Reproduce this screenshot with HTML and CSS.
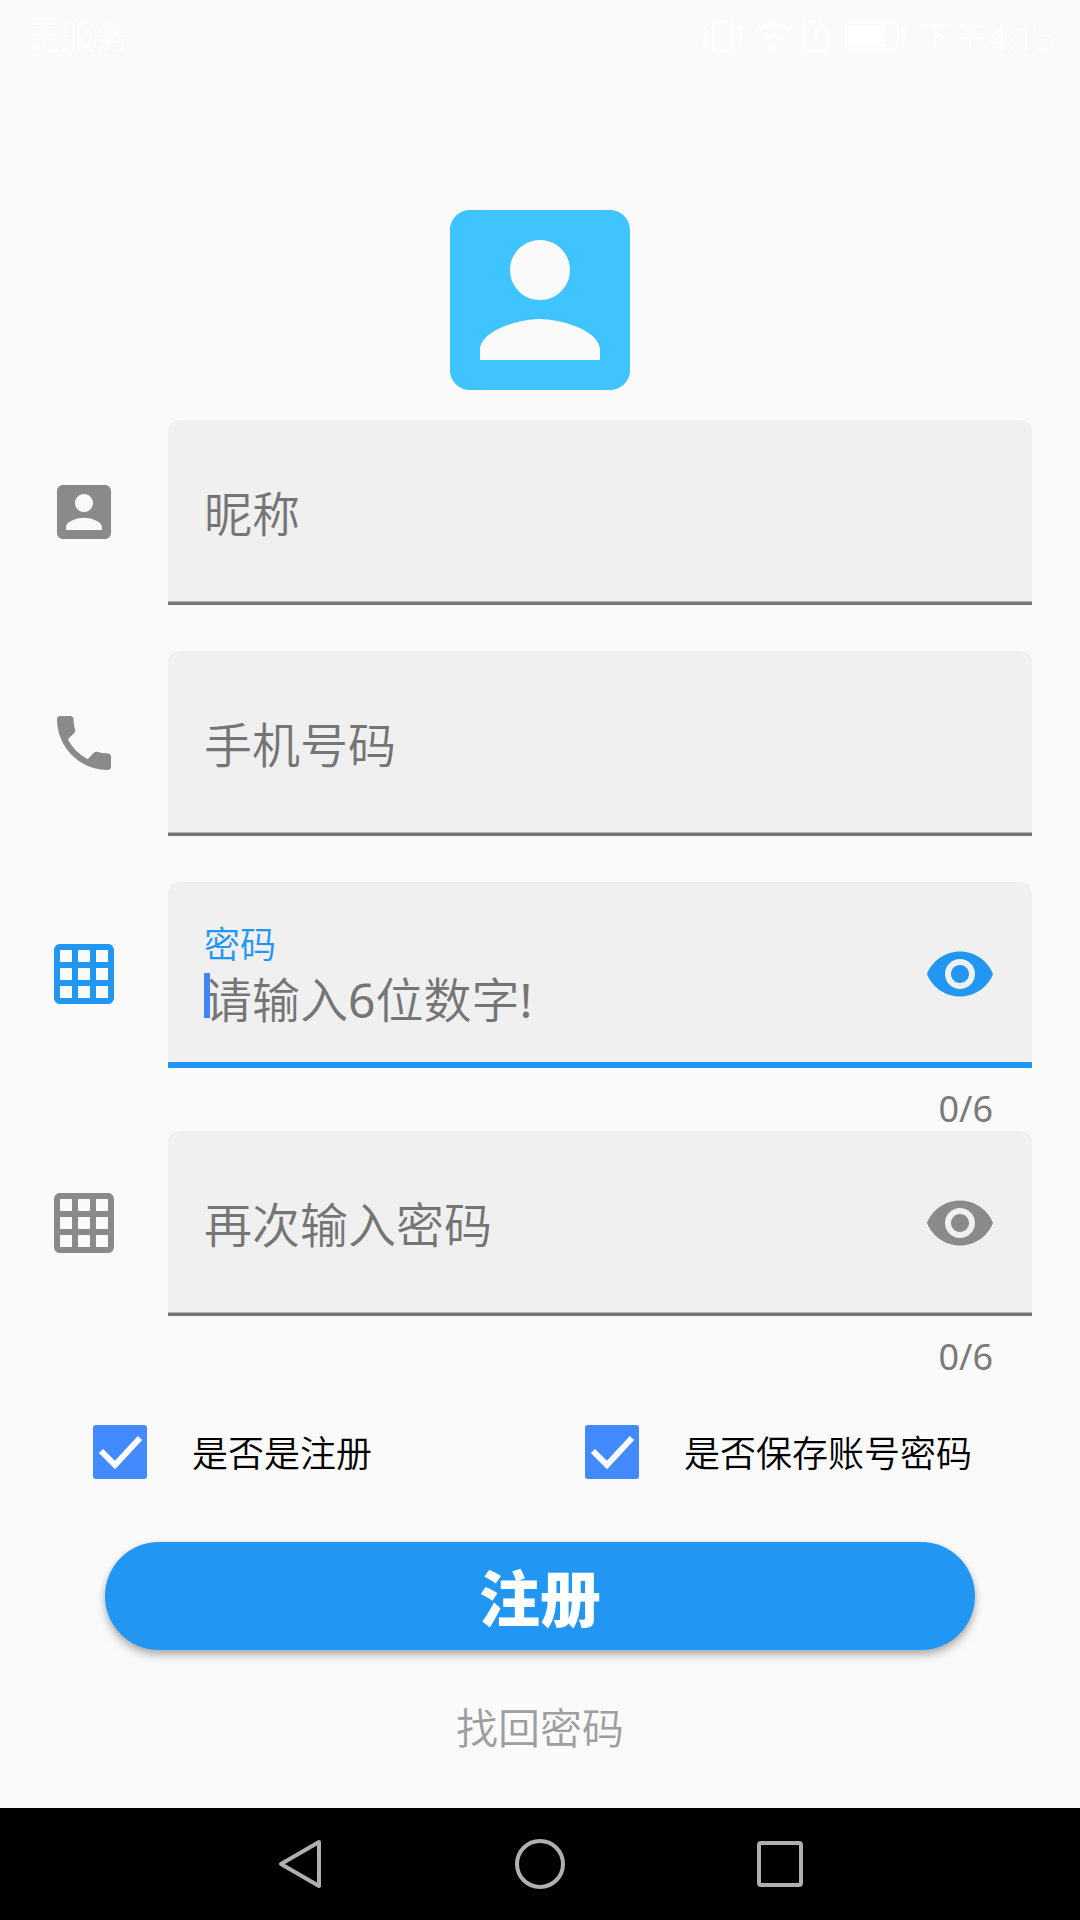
FILE: index.html
```html
<!DOCTYPE html>
<html lang="zh">
<head>
<meta charset="utf-8">
<title>注册</title>
<link rel="stylesheet" href="styles.css">
</head>
<body>
<div class="screen">
  <header class="status">
    <span class="status-carrier">无服务</span>
    <div class="status-right">
      <svg class="st-vibrate" viewBox="0 0 42 33"><path d="M5 5L1.500 9 5 13 1.500 17 5 21 1.500 25M37 5l3.500 4L37 13l3.500 4L37 21l3.500 4" fill="none" stroke="#fff" stroke-width="2.500"/><rect x="11.500" y="1.500" width="19" height="30" rx="3" fill="none" stroke="#fff" stroke-width="3"/></svg>
      <svg class="st-wifi" viewBox="0 0 38 31"><path d="M1.500 11Q19-5 36.500 11M9 19Q19 9 29 19" fill="none" stroke="#fff" stroke-width="3.500"/><circle cx="19" cy="27" r="3.500" fill="#fff"/></svg>
      <svg class="st-sim" viewBox="0 0 26 33"><path d="M1.500 3a1.500 1.500 0 0 1 1.500-1.500h12L24.500 11v19a1.500 1.500 0 0 1-1.500 1.500H3A1.500 1.500 0 0 1 1.500 30z" fill="none" stroke="#fff" stroke-width="3"/><path d="M13 9v11M13 23.500v4" stroke="#fff" stroke-width="3.500"/></svg>
      <svg class="st-batt" viewBox="0 0 61 28"><rect x="1" y="1" width="52" height="26" rx="3" fill="none" stroke="#fff" stroke-width="2"/><rect x="3" y="3" width="37" height="21" fill="#fff"/><rect x="56" y="5" width="5" height="17" fill="#fff"/></svg>
      <span class="status-time">下午4:15</span>
    </div>
  </header>

  <main class="form">
    <svg class="avatar" viewBox="0 0 24 24"><path d="M3 5v14c0 1.1.89 2 2 2h14c1.100 0 2-.9 2-2V5c0-1.100-.9-2-2-2H5c-1.110 0-2 .9-2 2zm12 4c0 1.660-1.340 3-3 3s-3-1.340-3-3 1.340-3 3-3 3 1.340 3 3zm-9 8c0-2 4-3.100 6-3.100s6 1.100 6 3.100v1H6v-1z"/></svg>

    <div class="row">
      <svg class="icon" viewBox="0 0 24 24"><path d="M3 5v14c0 1.1.89 2 2 2h14c1.100 0 2-.9 2-2V5c0-1.100-.9-2-2-2H5c-1.110 0-2 .9-2 2zm12 4c0 1.660-1.340 3-3 3s-3-1.340-3-3 1.340-3 3-3 3 1.340 3 3zm-9 8c0-2 4-3.100 6-3.100s6 1.100 6 3.100v1H6v-1z"/></svg>
      <div class="field"><span class="placeholder">昵称</span></div>
    </div>

    <div class="row">
      <svg class="icon" viewBox="0 0 24 24"><path d="M6.620 10.790c1.440 2.830 3.760 5.140 6.590 6.590l2.200-2.200c.27-.27.67-.36 1.020-.24 1.120.37 2.330.57 3.570.57.55 0 1 .45 1 1V20c0 .55-.45 1-1 1-9.390 0-17-7.610-17-17 0-.55.45-1 1-1h3.500c.55 0 1 .45 1 1 0 1.250.2 2.450.57 3.570.11.35.03.74-.25 1.020l-2.200 2.200z"/></svg>
      <div class="field"><span class="placeholder">手机号码</span></div>
    </div>

    <div class="row row-counter">
      <svg class="icon icon-active" viewBox="0 0 24 24"><path d="M20 2H4c-1.100 0-2 .9-2 2v16c0 1.100.9 2 2 2h16c1.100 0 2-.9 2-2V4c0-1.100-.9-2-2-2zM8 20H4v-4h4v4zm0-6H4v-4h4v4zm0-6H4V4h4v4zm6 12h-4v-4h4v4zm0-6h-4v-4h4v4zm0-6h-4V4h4v4zm6 12h-4v-4h4v4zm0-6h-4v-4h4v4zm0-6h-4V4h4v4z"/></svg>
      <div class="field-wrap">
        <div class="field field-active">
          <div class="field-text">
            <span class="float-label">密码</span>
            <span class="placeholder placeholder-focused"><i class="caret"></i>请输入<span class="num">6</span>位数字<span class="num">!</span></span>
          </div>
          <svg class="eye icon-active" viewBox="0 0 24 24"><path d="M12 4.500C7 4.500 2.730 7.610 1 12c1.730 4.390 6 7.500 11 7.500s9.270-3.110 11-7.500c-1.730-4.390-6-7.500-11-7.500zM12 17c-2.760 0-5-2.240-5-5s2.240-5 5-5 5 2.240 5 5-2.240 5-5 5zm0-8c-1.660 0-3 1.340-3 3s1.340 3 3 3 3-1.340 3-3-1.340-3-3-3z"/></svg>
        </div>
        <div class="counter">0/6</div>
      </div>
    </div>

    <div class="row row-counter">
      <svg class="icon" viewBox="0 0 24 24"><path d="M20 2H4c-1.100 0-2 .9-2 2v16c0 1.100.9 2 2 2h16c1.100 0 2-.9 2-2V4c0-1.100-.9-2-2-2zM8 20H4v-4h4v4zm0-6H4v-4h4v4zm0-6H4V4h4v4zm6 12h-4v-4h4v4zm0-6h-4v-4h4v4zm0-6h-4V4h4v4zm6 12h-4v-4h4v4zm0-6h-4v-4h4v4zm0-6h-4V4h4v4z"/></svg>
      <div class="field-wrap">
        <div class="field">
          <div class="field-text"><span class="placeholder">再次输入密码</span></div>
          <svg class="eye" viewBox="0 0 24 24"><path d="M12 4.500C7 4.500 2.730 7.610 1 12c1.730 4.390 6 7.500 11 7.500s9.270-3.110 11-7.500c-1.730-4.390-6-7.500-11-7.500zM12 17c-2.760 0-5-2.240-5-5s2.240-5 5-5 5 2.240 5 5-2.240 5-5 5zm0-8c-1.660 0-3 1.340-3 3s1.340 3 3 3 3-1.340 3-3-1.340-3-3-3z"/></svg>
        </div>
        <div class="counter">0/6</div>
      </div>
    </div>

    <div class="checks">
      <label class="check">
        <span class="box"><svg viewBox="0 0 54 54"><path d="M8 26l14 14L47 13" fill="none" stroke="#fff" stroke-width="6"/></svg></span>
        <span class="check-text">是否是注册</span>
      </label>
      <label class="check">
        <span class="box"><svg viewBox="0 0 54 54"><path d="M8 26l14 14L47 13" fill="none" stroke="#fff" stroke-width="6"/></svg></span>
        <span class="check-text">是否保存账号密码</span>
      </label>
    </div>

    <button class="submit" type="button">注册</button>
    <div class="recover">找回密码</div>
  </main>

  <nav class="navbar">
    <svg class="nav-back" viewBox="0 0 44 50"><path d="M41 3L3 25l38 22z" fill="none" stroke="#b0b0b0" stroke-width="4" stroke-linejoin="round"/></svg>
    <svg class="nav-home" viewBox="0 0 50 50"><circle cx="25" cy="25" r="23" fill="none" stroke="#b0b0b0" stroke-width="4"/></svg>
    <svg class="nav-recent" viewBox="0 0 46 46"><rect x="2" y="2" width="42" height="42" rx="2" fill="none" stroke="#b0b0b0" stroke-width="4"/></svg>
  </nav>
</div>
</body>
</html>
```

FILE: styles.css
```css
* { box-sizing: border-box; }
html, body { margin: 0; padding: 0; }
body {
  width: 1080px;
  height: 1920px;
  background: #fafafa;
  font-family: "Noto Sans", "Noto Sans CJK SC", sans-serif;
  overflow: hidden;
}
.screen { display: flex; flex-direction: column; height: 1920px; }

.status {
  height: 72px;
  flex: none;
  display: flex;
  justify-content: space-between;
  align-items: center;
  padding: 0 25px 0 26px;
  color: #fff;
  font-size: 34.5px;
  font-weight: 300;
  line-height: 40px;
}
.status-carrier { margin-top: 2px; }
.status-right { display: flex; align-items: center; gap: 10px; }
.st-vibrate { width: 42px; height: 33px; margin-left: -3px; }
.st-wifi { width: 38px; height: 31px; }
.st-sim { width: 26px; height: 33px; margin-left: 1px; }
.st-batt { width: 61px; height: 28px; margin-left: 6px; }
.status-time { margin: 2px 0 0 2px; }

.form { flex: 1; display: flex; flex-direction: column; }
.avatar {
  display: block;
  width: 240px;
  height: 240px;
  margin: 108px auto 0;
  fill: #40c4ff;
}

.row {
  display: flex;
  align-items: flex-start;
  gap: 48px;
  margin: 0 48px 46px;
}
.row-counter { margin-bottom: 0; }

.icon { width: 72px; height: 72px; flex: none; fill: #8a8a8a; margin-top: 56px; }
.eye { width: 72px; height: 72px; flex: none; fill: #8a8a8a; }
.icon-active { fill: #2196f3; }

.field-wrap { flex: 1; height: 249px; }
.field {
  flex: 1;
  height: 185px;
  padding: 2px 36px 0;
  display: flex;
  align-items: center;
  justify-content: space-between;
  background: #f0f0f0;
  border-bottom: 3px solid #757575;
  border-radius: 12px 12px 0 0;
  box-shadow: inset 0 -1px 0 #b4b4b4;
}
.field-active {
  height: 186px;
  padding-top: 4px;
  border-bottom: 6px solid #2196f3;
  box-shadow: none;
}
.field-text { display: flex; flex-direction: column; }
.placeholder {
  font-size: 48px;
  font-weight: 350;
  line-height: 60px;
  padding-top: 4px;
  color: #757575;
}
.num { font-weight: 400; }
.float-label {
  font-size: 36px;
  font-weight: 350;
  line-height: 42px;
  color: #2196f3;
  margin-top: 5px;
}
.placeholder-focused {
  position: relative;
  padding-top: 0;
  margin-top: 4px;
}
.caret {
  position: absolute;
  left: 0;
  top: 3px;
  width: 6px;
  height: 45px;
  background: #4285f4;
}
.counter {
  padding: 17px 39px 0 0;
  text-align: right;
  font-size: 36px;
  line-height: 48px;
  color: #7a7a7a;
}

.checks {
  display: flex;
  justify-content: space-between;
  padding: 45px 108px 0 93px;
}
.check {
  display: flex;
  align-items: center;
  gap: 45px;
  font-size: 36px;
  font-weight: 350;
  line-height: 50px;
  color: #000;
}
.check-text { padding-top: 4px; }
.box {
  width: 54px;
  height: 54px;
  background: #448aff;
  border-radius: 3px;
}
.box svg { display: block; width: 54px; height: 54px; }

.submit {
  display: block;
  width: 870px;
  height: 108px;
  margin: 63px auto 0;
  padding: 0 0 2px;
  border: 0;
  border-radius: 54px;
  background: #2196f3;
  color: #fff;
  font-family: inherit;
  font-size: 61px;
  font-weight: 900;
  box-shadow: 0 6px 10px rgba(0, 0, 0, .22), 0 2px 6px rgba(0, 0, 0, .14);
}
.recover {
  margin-top: 48px;
  text-align: center;
  font-size: 42px;
  font-weight: 350;
  line-height: 60px;
  color: #9e9e9e;
}

.navbar {
  height: 112px;
  flex: none;
  background: #000;
  display: flex;
  align-items: flex-start;
  padding: 31px 0 0 278px;
}
.nav-back { width: 44px; height: 50px; }
.nav-home { width: 50px; height: 50px; margin-left: 193px; }
.nav-recent { width: 46px; height: 46px; margin: 2px 0 0 192px; }
```
